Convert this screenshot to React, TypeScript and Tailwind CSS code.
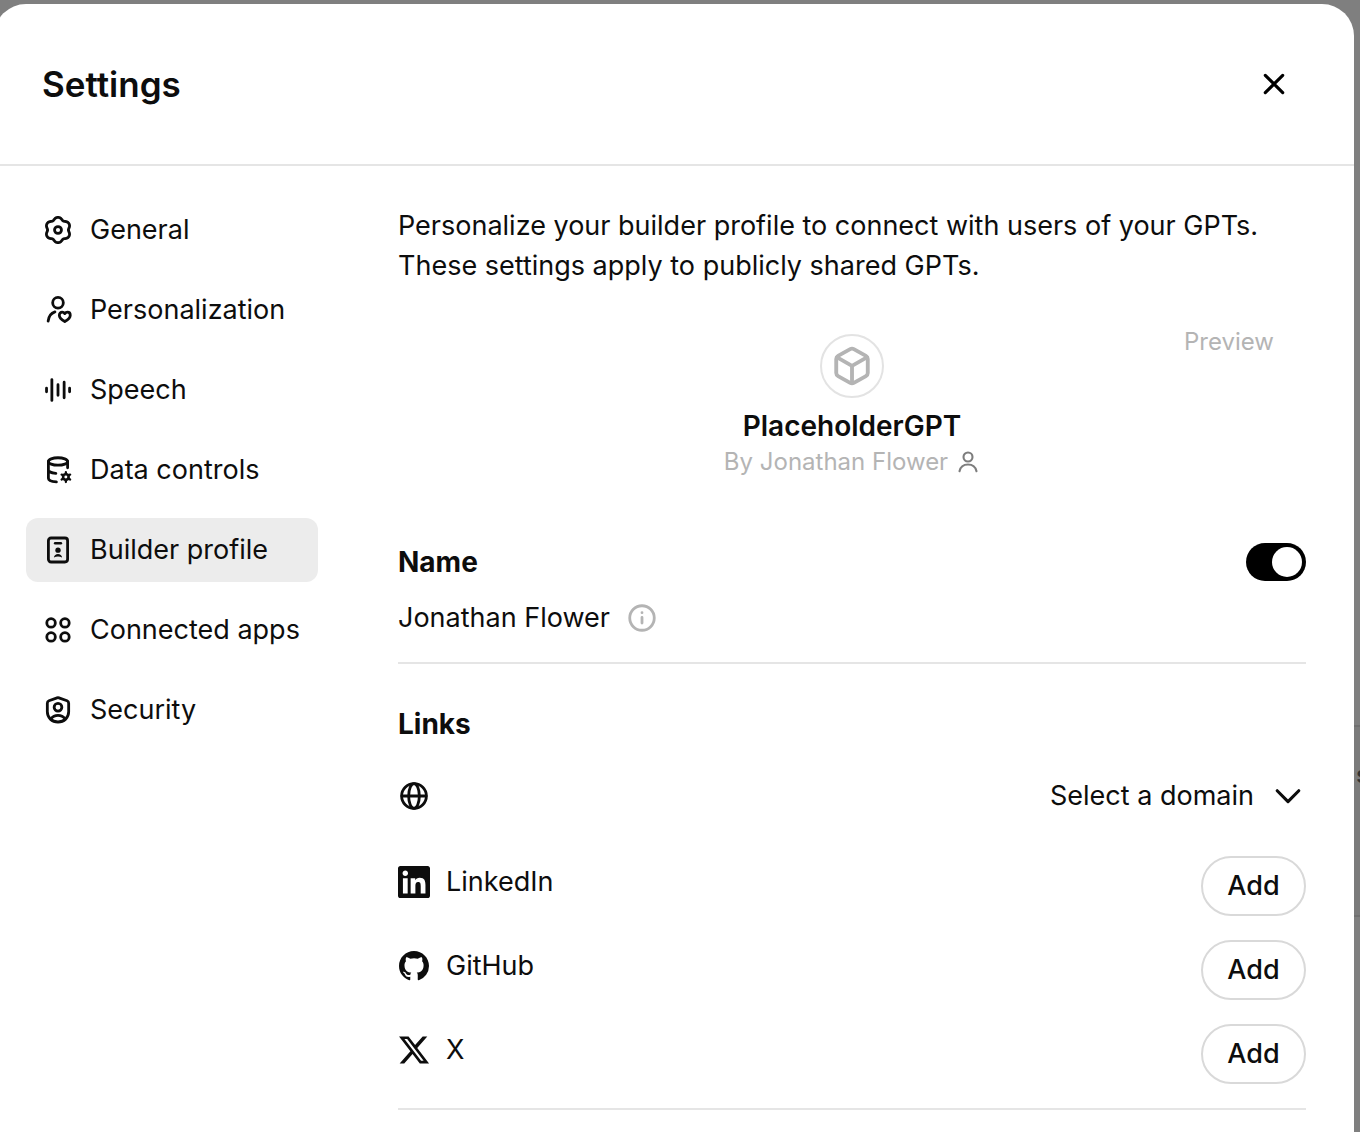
import { useState, type ReactNode } from "react";
import { FaLinkedin } from "react-icons/fa";

function Icon({
  children,
  className = "size-8",
  width = 2.1,
}: {
  children: ReactNode;
  className?: string;
  width?: number;
}) {
  return (
    <svg
      viewBox="0 0 24 24"
      className={`${className} shrink-0`}
      fill="none"
      stroke="currentColor"
      strokeWidth={width}
      strokeLinecap="round"
      strokeLinejoin="round"
      aria-hidden="true"
    >
      {children}
    </svg>
  );
}

// Closed outline with six soft lobes, one of them pointing up.
const gearOutline =
  "M" +
  Array.from({ length: 120 }, (_, i) => {
    const t = (i / 120) * Math.PI * 2;
    const r = 8.75 + 0.85 * Math.cos(6 * t) - 0.1 * Math.cos(12 * t);
    return `${(12 + r * Math.sin(t)).toFixed(2)} ${(12 - r * Math.cos(t)).toFixed(2)}`;
  }).join("L") +
  "Z";

const navItems: { label: string; icon: ReactNode }[] = [
  {
    label: "General",
    icon: (
      <>
        <path d={gearOutline} />
        <circle cx="12" cy="12" r="2.6" />
      </>
    ),
  },
  {
    label: "Personalization",
    icon: (
      <>
        <circle cx="12" cy="6.6" r="4" />
        <path d="M4.6 20.4c.4-3.7 2.3-6.100 5.100-7" />
        <path d="M17.100 20.600c-2.700-1.500-4.100-3-4.100-4.700 0-1.400 1-2.300 2.100-2.300.8 0 1.500.4 2 1.100.5-.7 1.200-1.100 2-1.100 1.100 0 2.100.9 2.100 2.300 0 1.700-1.400 3.200-4.100 4.700z" />
      </>
    ),
  },
  {
    label: "Speech",
    icon: <path d="M3.400 10.600v2.800M7.400 4.200v15.600M12 8v8M16.600 6.200v11.600M20.700 10.600v2.800" />,
  },
  {
    label: "Data controls",
    icon: (
      <>
        <ellipse cx="12" cy="5.600" rx="7.200" ry="2.800" />
        <path d="M4.800 5.600v12.600c0 1.500 2.600 2.500 6 2.700M4.800 12c0 1.200 2.300 2.200 5.600 2.500M19.200 5.600v4.800" />
        <path d="M17.900 13.600v7.400M14.700 15.450l6.400 3.700M21.100 15.450l-6.400 3.700" strokeWidth={1.700} />
        <circle cx="17.900" cy="17.300" r="2" />
        <circle cx="17.900" cy="17.300" r="1.100" fill="white" stroke="none" />
      </>
    ),
  },
  {
    label: "Builder profile",
    icon: (
      <>
        <rect x="4.800" y="3" width="14.400" height="18" rx="2" />
        <path d="M9.800 6.900h4.400" strokeWidth={1.800} />
        <circle cx="12" cy="12.100" r="2" fill="currentColor" stroke="none" />
        <path
          d="M8.900 17.700c.3-1.700 1.500-2.700 3.100-2.700s2.800 1 3.100 2.700c-1.800-1-4.400-1-6.200 0z"
          fill="currentColor"
          stroke="none"
        />
      </>
    ),
  },
  {
    label: "Connected apps",
    icon: (
      <>
        <circle cx="6.800" cy="6.700" r="3.200" />
        <circle cx="17.200" cy="6.700" r="3.200" />
        <circle cx="6.800" cy="17.200" r="3.200" />
        <circle cx="17.200" cy="17.200" r="3.200" />
      </>
    ),
  },
  {
    label: "Security",
    icon: (
      <>
        <path d="M11.300 2.900a2 2 0 0 1 1.400 0l6.100 2.200a1.900 1.900 0 0 1 1.200 1.800v6.500c0 4.400-3.400 7.600-8 7.600s-8-3.200-8-7.600V6.900a1.900 1.900 0 0 1 1.200-1.800z" />
        <circle cx="12" cy="10" r="2.900" />
        <path d="M6.800 18.600c1.100-1.600 3-2.600 5.200-2.600s4.100 1 5.200 2.600" />
      </>
    ),
  },
];

const links: { label: string; icon: ReactNode }[] = [
  {
    label: "LinkedIn",
    icon: <FaLinkedin viewBox="0 32 448 448" className="size-8 shrink-0" aria-hidden="true" />,
  },
  {
    label: "GitHub",
    icon: (
      <svg viewBox="0 0 16 16" className="size-8 shrink-0 p-px" fill="currentColor" aria-hidden="true">
        <path d="M8 0C3.580 0 0 3.580 0 8c0 3.540 2.290 6.530 5.470 7.590.4.070.55-.17.55-.38 0-.19-.01-.82-.01-1.490-2.010.37-2.530-.49-2.690-.94-.09-.23-.48-.94-.82-1.130-.28-.15-.68-.52-.01-.53.63-.01 1.080.58 1.230.82.72 1.210 1.870.87 2.330.66.070-.52.28-.87.51-1.070-1.780-.2-3.640-.89-3.640-3.950 0-.87.31-1.590.82-2.150-.08-.2-.36-1.020.08-2.120 0 0 .67-.21 2.200.82.640-.18 1.320-.27 2-.27s1.360.09 2 .27c1.530-1.040 2.200-.82 2.200-.82.440 1.100.16 1.920.08 2.120.51.560.82 1.270.82 2.150 0 3.070-1.870 3.750-3.650 3.950.29.250.54.730.54 1.480 0 1.070-.01 1.930-.01 2.200 0 .21.150.46.550.38A8.010 8.010 0 0 0 16 8c0-4.420-3.580-8-8-8z" />
      </svg>
    ),
  },
  {
    label: "X",
    icon: (
      <svg viewBox="0.5 0.5 23 23" className="size-8 shrink-0" fill="currentColor" aria-hidden="true">
        <path d="M18.244 2.250h3.308l-7.227 8.260 8.502 11.240H16.170l-5.214-6.817L4.990 21.750H1.680l7.730-8.835L1.254 2.250H8.080l4.713 6.231zm-1.161 17.520h1.833L7.084 4.126H5.117z" />
      </svg>
    ),
  },
];

export default function App() {
  const [active, setActive] = useState("Builder profile");
  const [showName, setShowName] = useState(true);

  return (
    <div className="relative isolate min-h-screen overflow-hidden bg-[#7f7f7f] pt-1 pr-1.5 font-['Inter',sans-serif] text-[27px] leading-10 text-[#0d0d0d]">
      {/* Page behind the dialog, of which only a sliver shows */}
      <div
        aria-hidden="true"
        className="absolute top-[725px] right-0 -z-10 h-[192px] w-6 overflow-hidden border-y-2 border-[#707070] bg-[#7b7b7b] pt-8 text-2xl font-medium text-[#333333]"
      >
        <div className="pl-5">s</div>
        <div className="pl-1">e</div>
      </div>
      <main className="-ml-1.5 min-h-screen rounded-t-[32px] bg-white">
        <header className="flex h-[162px] items-center justify-between border-b-2 border-[#e5e5e5] pr-14 pl-12">
          <h1 className="text-[35px] font-semibold">Settings</h1>
          <button type="button" aria-label="Close" className="flex size-12 items-center justify-center text-black">
            <Icon className="size-9">
              <path d="M6.200 6.200l11.600 11.600M17.800 6.200L6.200 17.800" />
            </Icon>
          </button>
        </header>
        <div className="flex pt-8 pr-12 pl-8">
          <nav className="flex w-[292px] shrink-0 flex-col gap-4" aria-label="Settings sections">
            {navItems.map((item) => (
              <button
                key={item.label}
                type="button"
                onClick={() => setActive(item.label)}
                aria-current={item.label === active ? "page" : undefined}
                className={`flex h-16 items-center gap-4 rounded-xl px-4 text-left whitespace-nowrap ${
                  item.label === active ? "bg-[#ececec]" : ""
                }`}
              >
                <Icon>{item.icon}</Icon>
                {item.label}
              </button>
            ))}
          </nav>
          <div className="ml-20 min-w-0 flex-1 pt-2">
            <p>
              Personalize your builder profile to connect with users of your GPTs. These settings apply to publicly
              shared GPTs.
            </p>
            <section className="relative mt-12 flex flex-col items-center" aria-label="Preview">
              <span className="absolute top-0 right-8 text-2xl leading-4 text-[#b4b4b4]">Preview</span>
              <div className="flex size-16 items-center justify-center rounded-full border-2 border-[#e3e3e3] text-[#b4b4b4]">
                <Icon className="size-11">
                  <path d="M11 2.800a2 2 0 0 1 2 0l6.600 3.700a2 2 0 0 1 1 1.700v7.600a2 2 0 0 1-1 1.700l-6.600 3.700a2 2 0 0 1-2 0l-6.600-3.700a2 2 0 0 1-1-1.700V8.200a2 2 0 0 1 1-1.700z" />
                  <path d="M3.900 7.300L12 11.900l8.100-4.600M12 11.900v9.400" />
                </Icon>
              </div>
              <h2 className="mt-2 text-[28px] font-semibold">PlaceholderGPT</h2>
              <div className="flex items-center gap-2 text-2xl leading-8 text-[#b4b4b4]">
                By Jonathan Flower
                <Icon className="size-6 text-[#7d7d7d]">
                  <circle cx="12" cy="7" r="4.500" />
                  <path d="M3.500 21.300c.9-4.300 4-6.800 8.500-6.800s7.600 2.500 8.500 6.800" />
                </Icon>
              </div>
            </section>
            <section className="mt-16 border-b-2 border-[#e5e5e5] pb-6">
              <div className="flex items-center justify-between">
                <h2 id="name-heading" className="text-[28px] font-bold">
                  Name
                </h2>
                <input
                  type="checkbox"
                  role="switch"
                  aria-labelledby="name-heading"
                  checked={showName}
                  onChange={(e) => setShowName(e.target.checked)}
                  className="h-[38px] w-[60px] appearance-none rounded-full bg-gray-300 p-1 before:block before:size-[30px] before:rounded-full before:bg-white checked:bg-black checked:before:ml-[22px]"
                />
              </div>
              <div className="mt-4 flex items-center gap-4">
                Jonathan Flower
                <Icon className="size-8 text-[#b4b4b4]">
                  <circle cx="12" cy="12" r="9.200" />
                  <path d="M12 11.600v4.200M12 8h.01" />
                </Icon>
              </div>
            </section>
            <section className="mt-10 border-b-2 border-[#e5e5e5] pb-6">
              <h2 className="text-[28px] font-bold">Links</h2>
              <div className="mt-8 flex items-center justify-between">
                <Icon>
                  <circle cx="12" cy="12" r="9.300" />
                  <ellipse cx="12" cy="12" rx="4" ry="9.300" />
                  <path d="M3 12h18" />
                </Icon>
                <span className="flex items-center">
                  <select aria-label="Select a domain" className="appearance-none bg-transparent text-right">
                    <option>Select a domain</option>
                  </select>
                  <Icon className="ml-4 size-9">
                    <path d="M4.800 8.500l7.200 7.200 7.200-7.200" />
                  </Icon>
                </span>
              </div>
              <ul className="mt-10 flex flex-col gap-6">
                {links.map((link) => (
                  <li key={link.label} className="flex items-start justify-between">
                    <span className="flex h-[52px] items-center gap-4">
                      {link.icon}
                      {link.label}
                    </span>
                    <button
                      type="button"
                      aria-label={`Add ${link.label}`}
                      className="h-[60px] w-[105px] rounded-full border-2 border-[#d9d9d9] font-medium"
                    >
                      Add
                    </button>
                  </li>
                ))}
              </ul>
            </section>
          </div>
        </div>
      </main>
    </div>
  );
}
